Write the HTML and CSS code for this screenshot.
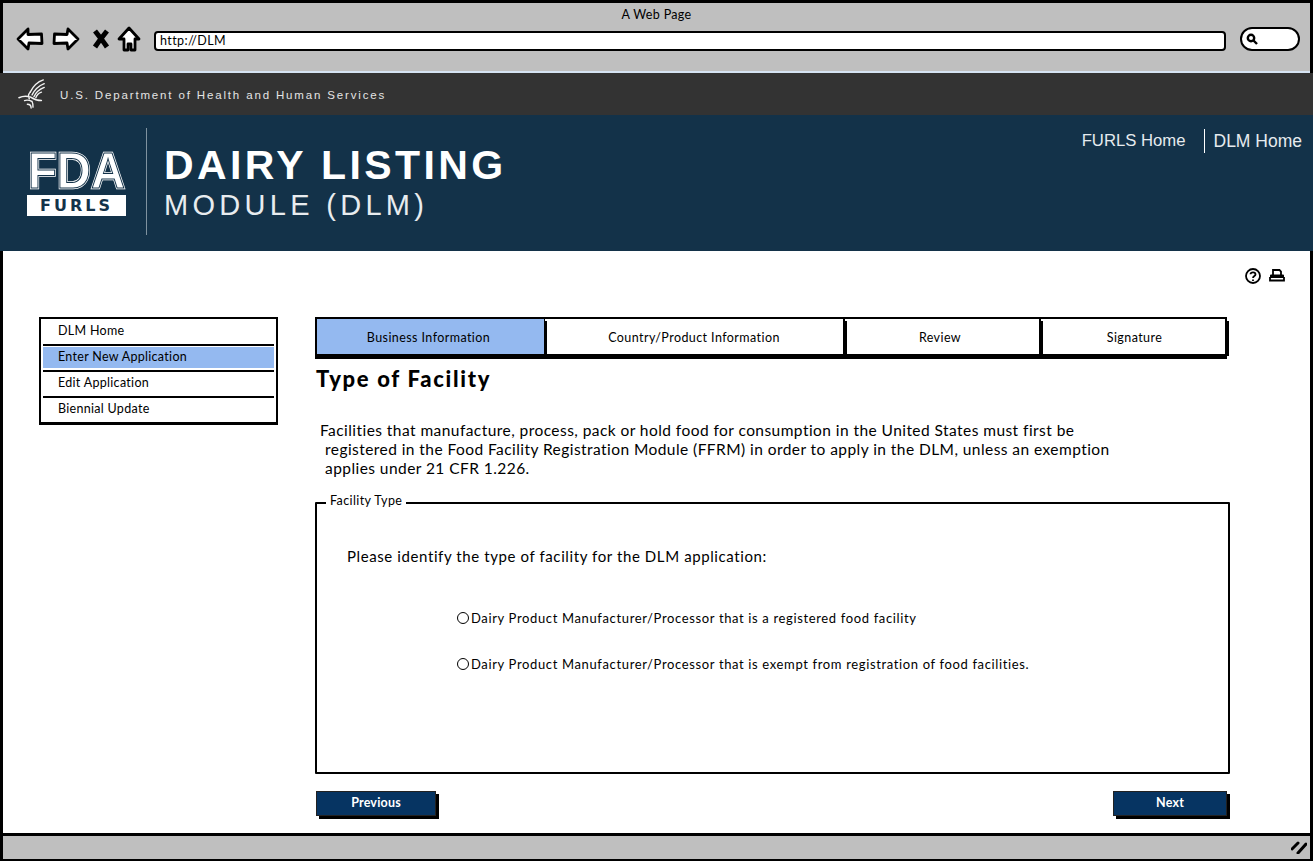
FILE: index.html
```html
<!DOCTYPE html>
<html lang="en">
<head>
<meta charset="utf-8">
<title>A Web Page</title>
<link rel="stylesheet" href="styles.css">
</head>
<body>
<div class="app">
  <section class="chrome">
    <div class="chrome-title">A Web Page</div>
    <div class="chrome-bar">
      <svg class="ic ic-back" viewBox="0 0 28 24"><path d="M12 2 2 12l10 10 1-6 13 .5L25.500 7 12 7.500z"/></svg>
      <svg class="ic ic-fwd" viewBox="0 0 28 24"><path d="M16 2l10 10-10 10-1-6-13 .5L2.500 7 15 7.500z"/></svg>
      <svg class="ic ic-x" viewBox="0 0 18 20"><path class="thick" d="M3 2c4 5 8 10 12 16M15 2C11 7 7 12 3 18"/></svg>
      <svg class="ic ic-home" viewBox="0 0 24 26"><path d="M12 2 2 13l5 0 0 11 4 0 0-6 3 0 0 6 4 0 0-11 4 0z"/></svg>
      <div class="address">http://DLM</div>
      <div class="search"><svg class="search-glass" viewBox="0 0 12 12"><circle cx="5" cy="5" r="3.200"/><path d="M7.500 7.500 11 11"/></svg></div>
    </div>
  </section>

  <section class="gov">
    <svg class="eagle" viewBox="0 0 32 32">
      <path d="M27 1C21 3 16 8 13 14M28 5C23 7 18 11 15 17M28 9c-5 2-9 5-11 10M25 14c-3 1-5 3-6 6"/>
      <path d="M1 20c4-2 8-2 12-1 3 2 6 4 12 4M7 23c3-1 6 0 8 1 1 2 1 4 1 6M10 27c2 0 4 1 4 4M13 14c-2 2-2 5-1 7"/>
    </svg>
    <span class="gov-text">U.S. Department of Health and Human Services</span>
  </section>

  <header class="banner">
    <div class="logo">
      <svg class="fda" viewBox="0 0 99 38">
        <text class="fda-a" x="1" y="36.500" textLength="97" lengthAdjust="spacingAndGlyphs">FDA</text>
        <text class="fda-b" x="1" y="36.500" textLength="97" lengthAdjust="spacingAndGlyphs">FDA</text>
      </svg>
      <div class="furls">FURLS</div>
    </div>
    <div class="banner-rule"></div>
    <div class="title">
      <div class="title-main">DAIRY LISTING</div>
      <div class="title-sub">MODULE (DLM)</div>
    </div>
    <nav class="banner-nav">
      <a class="banner-link">FURLS Home</a>
      <a class="banner-link banner-link-last">DLM Home</a>
    </nav>
  </header>

  <section class="content">
    <div class="tools">
      <svg class="tool" viewBox="0 0 16 16"><circle cx="8" cy="8" r="7"/><path d="M5.500 6.200C5.700 3.800 10.500 3.800 10.500 6.400 10.500 8 8 8 8 10"/><path d="M8 11.500v1.500"/></svg>
      <svg class="tool" viewBox="0 0 16 16"><path d="M4 7V2h6.500L12 3.500V7"/><path class="solid" d="M2 6.500h12a1 1 0 0 1 1 1V10H1V7.500a1 1 0 0 1 1-1z"/><path d="M1 9v3.500h14V9"/></svg>
    </div>
    <div class="columns">
      <ul class="side">
        <li class="side-item">DLM Home</li>
        <li class="side-item side-item-on">Enter New Application</li>
        <li class="side-item">Edit Application</li>
        <li class="side-item">Biennial Update</li>
      </ul>
      <main class="main">
        <div class="tabs">
          <div class="tab tab-on">Business Information</div>
          <div class="tab">Country/Product Information</div>
          <div class="tab tab-review">Review</div>
          <div class="tab tab-sign">Signature</div>
        </div>
        <h1 class="heading">Type of Facility</h1>
        <p class="intro">
          <span class="intro-first">Facilities that manufacture, process, pack or hold food for consumption in the United States must first be</span>
          <span class="intro-line">registered in the Food Facility Registration Module (FFRM) in order to apply in the DLM, unless an exemption</span>
          <span class="intro-line">applies under 21 CFR 1.226.</span>
        </p>
        <fieldset class="facility">
          <legend class="facility-legend">Facility Type</legend>
          <p class="prompt">Please identify the type of facility for the DLM application:</p>
          <label class="choice"><input class="radio" type="radio" name="facility">Dairy Product Manufacturer/Processor that is a registered food facility</label>
          <label class="choice choice-next"><input class="radio" type="radio" name="facility">Dairy Product Manufacturer/Processor that is exempt from registration of food facilities.</label>
        </fieldset>
        <div class="actions">
          <button class="btn btn-prev" type="button">Previous</button>
          <button class="btn btn-next" type="button">Next</button>
        </div>
      </main>
    </div>
  </section>

  <footer class="status">
    <svg class="grip" viewBox="0 0 16 13"><path d="M1 8 7 2M7 12l8-9"/></svg>
  </footer>
</div>
</body>
</html>
```
FILE: styles.css
```css
* { box-sizing: border-box; }
html, body { margin: 0; padding: 0; background: #fff; }
body { font-family: Lato, "Noto Sans", sans-serif; color: #000; }
.app { width: 1313px; height: 861px; display: flex; flex-direction: column; overflow: hidden; }

/* browser chrome */
.chrome { height: 73px; flex: none; background: #bfbfbf; border: 3px solid #000; border-bottom: 0; box-shadow: inset 0 -2px 0 #d5e3f3; }
.chrome-title { height: 21px; padding-top: 3px; text-align: center; font-size: 12.500px; line-height: 17px; letter-spacing: .35px; }
.chrome-bar { display: flex; align-items: center; height: 28px; padding-left: 13px; margin-top: 1px; }
.ic { flex: none; fill: #fff; stroke: #000; stroke-width: 2.800; stroke-linejoin: round; }
.ic-back { width: 28px; height: 24px; }
.ic-fwd { width: 28px; height: 24px; margin-left: 8px; }
.ic-x { width: 18px; height: 20px; margin-left: 12px; }
.ic-x .thick { fill: none; stroke-width: 5; }
.ic-home { width: 24px; height: 26px; margin-left: 7px; }
.address { width: 1072px; height: 20px; margin-left: 13px; margin-top: 3px; background: #fff; border: 2.500px solid #000; border-radius: 4px; padding-left: 4px; font-size: 12.500px; line-height: 15px; letter-spacing: .4px; }
.search { width: 60px; height: 24px; margin-left: 14px; background: #fff; border: 2.500px solid #000; border-radius: 12px; padding: 4px 0 0 4px; }
.search-glass { display: block; width: 12px; height: 12px; fill: none; stroke: #000; stroke-width: 2.400; }

/* agency bar */
.gov { height: 42px; flex: none; background: #333; display: flex; align-items: center; padding-left: 18px; }
.eagle { width: 30px; height: 30px; fill: none; stroke: #f2f2f2; stroke-width: 1.500; stroke-linecap: round; }
.gov-text { margin-left: 12px; color: #e4e4e4; font: 11.500px "Liberation Sans", sans-serif; letter-spacing: 1.850px; position: relative; top: 1px; }

/* banner */
.banner { height: 136px; flex: none; background: #133249; display: flex; align-items: flex-start; color: #fff; font-family: "Liberation Sans", sans-serif; }
.logo { width: 99px; margin: 36px 0 0 27px; flex: none; }
.fda { display: block; width: 99px; height: 38px; overflow: visible; }
.fda text { font: bold 50px "Liberation Sans", sans-serif; }
.fda-a { fill: #fff; stroke: #fff; stroke-width: 2.400; }
.fda-b { fill: none; stroke: #133249; stroke-width: 1; }
.furls { height: 21px; margin-top: 6px; background: #fff; color: #133249; text-align: center; font: bold 16px/21px "DejaVu Sans", sans-serif; letter-spacing: 3px; }
.banner-rule { width: 1px; height: 107px; margin: 13px 0 0 20px; background: #7f929f; flex: none; }
.title { margin: 31px 0 0 17px; flex: none; }
.title-main { font-weight: bold; font-size: 41px; line-height: 38px; letter-spacing: 3.400px; white-space: nowrap; }
.title-sub { font-size: 29px; line-height: 32px; margin-top: 5px; letter-spacing: 4.300px; color: #e8ecef; white-space: nowrap; }
.banner-nav { margin-left: auto; margin-top: 14px; display: flex; align-items: center; height: 24px; }
.banner-link { font-size: 16.700px; line-height: 24px; color: #e6ebef; white-space: nowrap; }
.banner-link-last { margin-left: 18px; padding-left: 9px; padding-right: 11px; border-left: 1px solid #fff; font-size: 17.500px; }

/* content */
.content { flex: 1; border-left: 3px solid #000; border-right: 3px solid #000; padding: 17px 0 0 36px; }
.tools { display: flex; justify-content: flex-end; gap: 8px; height: 16px; padding-right: 25px; }
.tool { width: 16px; height: 16px; fill: none; stroke: #000; stroke-width: 1.800; }
.tool .solid { fill: #000; stroke: none; }
.columns { display: flex; align-items: flex-start; margin-top: 33px; }
.side { width: 239px; height: 107px; flex: none; margin: 0; padding: 0 2px; list-style: none; border: 2px solid #000; box-shadow: 0 1px 0 #000; }
.side-item { height: 26px; padding-left: 15px; font-size: 12.500px; line-height: 22px; letter-spacing: .3px; border-top: 2px solid #000; }
.side-item:first-child { border-top: 0; height: 25px; line-height: 24px; }
.side-item-on { background: linear-gradient(#fff 1px, #94b9f0 1px, #94b9f0 22px, #fff 22px); }
.main { width: 915px; margin-left: 37px; flex: none; }
.tabs { display: grid; grid-template-columns: 228px 300px 196px 186px; width: 912px; height: 39px; border: 2px solid #000; border-right: 0; box-shadow: 0 3px 0 #000; }
.tab { display: flex; align-items: center; justify-content: center; font-size: 12.500px; letter-spacing: .42px; border-right: 2px solid #000; padding-top: 2px; box-shadow: 2px 2px 0 #000; }
.tab-on { background: #94b9f0; border-right-width: 1px; padding-right: 4px; }
.tab-review { padding-right: 4px; }
.tab-sign { padding-left: 3px; }
.heading { margin: 10px 0 0 1px; font-size: 22px; font-weight: 900; line-height: 26px; letter-spacing: 1.700px; }
.intro { margin: 29px 0 0; font-size: 15.500px; line-height: 19px; letter-spacing: .44px; white-space: nowrap; }
.intro-first { display: block; padding-left: 5px; }
.intro-line { display: block; padding-left: 10px; }
.facility { margin: 15px 0 0; padding: 0; width: 915px; height: 281px; border: 2px solid #000; border-radius: 1px; }
.facility-legend { margin-left: 9px; padding: 0 4px 4px; font-size: 12.500px; line-height: 16px; letter-spacing: .4px; }
.prompt { margin: 33px 0 0 30px; font-size: 15px; line-height: 20px; letter-spacing: .6px; }
.choice { display: flex; align-items: center; margin: 43px 0 0 140px; font-size: 13px; line-height: 18px; letter-spacing: .64px; white-space: nowrap; }
.choice-next { margin-top: 28px; }
.radio { appearance: none; width: 12px; height: 12px; margin: 0 2px 0 0; border: 1px solid #000; border-radius: 50%; background: #fff; flex: none; }
.actions { display: flex; justify-content: space-between; margin-top: 17px; }
.btn { height: 25px; padding: 0 0 2px; background: #063462; color: #fff; border: 1px solid #222; box-shadow: 3px 3px 0 #000; font: bold 12.500px Lato, sans-serif; letter-spacing: .2px; }
.btn-prev { width: 120px; margin-left: 1px; }
.btn-next { width: 114px; margin-right: 3px; }

/* status bar */
.status { height: 28px; flex: none; background: #bfbfbf; border: 3px solid #000; border-bottom-width: 2px; display: flex; justify-content: flex-end; align-items: center; padding-right: 3px; }
.grip { width: 16px; height: 13px; fill: none; stroke: #000; stroke-width: 3; stroke-linecap: round; }
```
